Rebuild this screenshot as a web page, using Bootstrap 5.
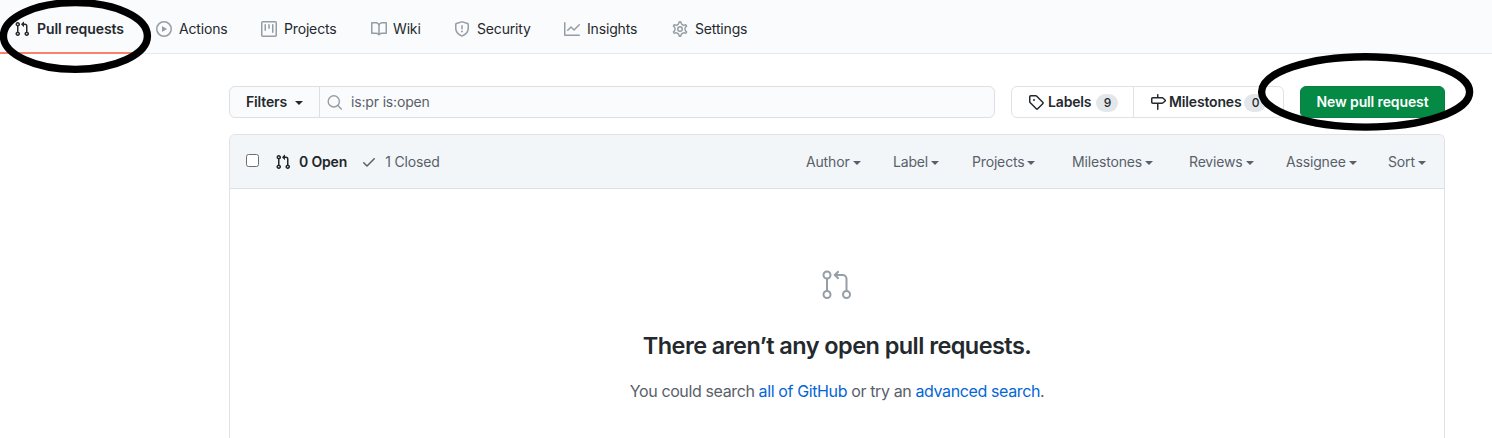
<!DOCTYPE html>
<html lang="en">
<head>
<meta charset="utf-8">
<title>Pull requests</title>
<link href="https://cdn.jsdelivr.net/npm/bootstrap@5.3.0/dist/css/bootstrap.min.css" rel="stylesheet">
<style>
body{font:14px/21px Inter,"Liberation Sans",sans-serif;color:#24292e;letter-spacing:-.16px;background:#fff}
svg{fill:currentColor;flex:none;display:block}
.semi{font-weight:600}
.repo-nav{height:54px;background:#fafbfc;border-bottom:1px solid #e6e8eb}
.repo-nav .nav-link{height:54px;padding:4px 0 0 14px;color:#24292e;gap:7px;white-space:nowrap}
.repo-nav svg{color:#959da5}
.repo-nav span{margin-top:-1px}
.repo-nav .active{width:140px;border-bottom:2px solid #f9826c;padding-top:6px;letter-spacing:-.06px}
.repo-nav .active svg{color:#24292e}
.repo-nav .nav-link:not(.active){padding-left:0}
.n-actions{width:105px;margin-left:16px}.n-projects{width:110px}.n-wiki{width:83px}.n-security{width:110px}.n-insights{width:108px}
.page{width:1216px;margin:32px 0 0 229px}
.tools{height:32px}
.filters{width:91px;height:32px;border:1px solid #dcdfe3;border-radius:6px 0 0 6px;background:#fafbfc;padding:0 0 1px 16px;gap:8px}
.query{width:676px;height:32px;margin-left:-1px;border:1px solid #dcdfe3;border-radius:0 6px 6px 0;background:#fafbfc;color:#586069;padding-left:7px;gap:8px}
.query span{margin-top:-1px}
.links{width:273px;height:32px;margin-left:16px;border:1px solid #dfe2e6;border-radius:6px}
.links>a{color:#24292e;text-decoration:none}
.links span{margin-top:-1px}
.l-labels{width:122px;border-right:1px solid #dfe2e6;padding-left:16px;gap:4px}
.l-miles{padding-left:16px;gap:3px}
.links .counter{background:#e4e7ea;border-radius:10px;height:18px;line-height:18px;font-size:12px;font-weight:500;width:22px;text-align:center;margin:1px 0 0 1px}
.l-miles .counter{margin-left:0}
.new-pr{width:145px;height:32px;margin-left:16px;background:#048a45;border:1px solid #0a7d40;border-radius:6px;color:#fff;font-size:14px;line-height:20px;padding:0;letter-spacing:-.12px}
.caret{width:0;border:4px solid transparent;border-top-color:currentColor;border-bottom:0;position:relative;top:1px}
.list-box{margin-top:16px;height:304px;border:1px solid #dfe2e6;border-bottom:0;border-radius:6px 6px 0 0}
.list-head{height:54px;background:#f3f6f9;border-bottom:1px solid #dcdfe3;border-radius:5px 5px 0 0;color:#586069;padding-left:16px}
.tick{width:13px;height:13px;border:1px solid #6d6f72;border-radius:2.5px;background:#fff;position:relative;top:-1px}
.menus>span{display:flex;align-items:center;gap:3px}
.blank h3{font-size:23.5px;line-height:30px;font-weight:600;letter-spacing:-.56px;margin:30px 0 0}
.blank p{font-size:16px;line-height:24px;color:#586069;margin:18px 0 0;letter-spacing:-.38px}
.blank a{color:#0366d6;text-decoration:none}
.rings{position:absolute;left:0;top:0;pointer-events:none}
</style>
</head>
<body>
<nav class="repo-nav nav flex-nowrap">
<a class="nav-link active semi d-flex align-items-center" href="#"><svg width="16" height="16" viewBox="0 0 16 16"><path id="pr" d="M7.177 3.073L9.573.677A.25.25 0 0110 .854v4.792a.25.25 0 01-.427.177L7.177 3.427a.25.25 0 010-.354zM3.75 2.5a.75.75 0 100 1.5.75.75 0 000-1.5zm-2.25.75a2.25 2.25 0 113 2.122v5.256a2.251 2.251 0 11-1.5 0V5.372A2.25 2.25 0 011.5 3.25zM11 2.5h-1V4h1a1 1 0 011 1v5.628a2.251 2.251 0 101.5 0V5A2.5 2.5 0 0011 2.5zm1 10.25a.75.75 0 111.5 0 .75.75 0 01-1.5 0zM3.75 12a.75.75 0 100 1.5.75.75 0 000-1.5z"/></svg><span>Pull requests</span></a>
<a class="nav-link n-actions d-flex align-items-center" href="#"><svg width="16" height="16" viewBox="0 0 16 16"><path d="M1.5 8a6.5 6.5 0 1113 0 6.5 6.5 0 01-13 0zM8 0a8 8 0 100 16A8 8 0 008 0zM6.379 5.227A.25.25 0 006 5.442v5.117a.25.25 0 00.379.214l4.264-2.559a.25.25 0 000-.428L6.379 5.227z"/></svg><span>Actions</span></a>
<a class="nav-link n-projects d-flex align-items-center" href="#"><svg width="16" height="16" viewBox="0 0 16 16"><path fill-rule="evenodd" d="M1.75 0A1.75 1.75 0 000 1.75v12.5C0 15.216.784 16 1.75 16h12.5A1.75 1.75 0 0016 14.25V1.75A1.75 1.75 0 0014.25 0H1.75zM1.5 1.75a.25.25 0 01.25-.25h12.5a.25.25 0 01.25.25v12.5a.25.25 0 01-.25.25H1.75a.25.25 0 01-.25-.25V1.75zM11.75 3a.75.75 0 00-.75.75v7.5a.75.75 0 001.5 0v-7.5a.75.75 0 00-.75-.75zm-8.25.75a.75.75 0 011.5 0v5.5a.75.75 0 01-1.5 0v-5.5zM8 3a.75.75 0 00-.75.75v3.5a.75.75 0 001.5 0v-3.5A.75.75 0 008 3z"/></svg><span>Projects</span></a>
<a class="nav-link n-wiki d-flex align-items-center" href="#"><svg width="16" height="16" viewBox="0 0 16 16"><path fill-rule="evenodd" d="M0 1.75A.75.75 0 01.75 1h4.253c1.227 0 2.317.59 3 1.501A3.744 3.744 0 0111.006 1h4.245a.75.75 0 01.75.75v10.5a.75.75 0 01-.75.75h-4.507a2.25 2.25 0 00-1.591.659l-.622.621a.75.75 0 01-1.06 0l-.622-.621A2.25 2.25 0 005.258 13H.75a.75.75 0 01-.75-.75V1.75zm8.755 3a2.25 2.25 0 012.25-2.25H14.5v9h-3.757c-.71 0-1.4.201-1.992.572l.004-7.322zm-1.504 7.324l.004-5.073-.002-2.253A2.25 2.25 0 005.003 2.5H1.5v9h3.757a3.75 3.75 0 011.994.574z"/></svg><span style="margin-left:-1px">Wiki</span></a>
<a class="nav-link n-security d-flex align-items-center" href="#"><svg width="16" height="16" viewBox="0 0 16 16"><path fill-rule="evenodd" d="M7.467.133a1.75 1.75 0 011.066 0l5.25 1.68A1.75 1.75 0 0115 3.48V7c0 1.566-.32 3.182-1.303 4.682-.983 1.498-2.585 2.813-5.032 3.855a1.7 1.7 0 01-1.33 0c-2.447-1.042-4.049-2.357-5.032-3.855C1.32 10.182 1 8.566 1 7V3.48a1.75 1.75 0 011.217-1.667l5.25-1.68zm.61 1.429a.25.25 0 00-.153 0l-5.25 1.68a.25.25 0 00-.174.238V7c0 1.358.275 2.666 1.057 3.86.784 1.194 2.121 2.34 4.366 3.297a.2.2 0 00.154 0c2.245-.956 3.582-2.104 4.366-3.298C13.225 9.666 13.5 8.36 13.5 7V3.48a.25.25 0 00-.174-.237l-5.25-1.68zM9 10.5a1 1 0 11-2 0 1 1 0 012 0zm-.25-5.75a.75.75 0 10-1.5 0v3a.75.75 0 001.5 0v-3z"/></svg><span>Security</span></a>
<a class="nav-link n-insights d-flex align-items-center" href="#"><svg width="16" height="16" viewBox="0 0 16 16"><path d="M1.5 1.75a.75.75 0 00-1.5 0v12.5c0 .414.336.75.75.75h14.5a.75.75 0 000-1.5H1.5V1.75zm14.28 2.53a.75.75 0 00-1.06-1.06L10 7.94 7.53 5.47a.75.75 0 00-1.06 0L3.22 8.72a.75.75 0 001.06 1.06L7 7.06l2.47 2.47a.75.75 0 001.06 0l5.25-5.25z"/></svg><span>Insights</span></a>
<a class="nav-link d-flex align-items-center" href="#"><svg width="16" height="16" viewBox="0 0 16 16"><g fill="none" stroke="currentColor"><path stroke-width="1.3" transform="translate(8 8) scale(1.115) translate(-8 -8)" d="M7.429 1.525a6.593 6.593 0 011.142 0c.036.003.108.036.137.146l.289 1.105c.147.56.55.967.997 1.189.174.086.341.183.501.29.417.278.97.423 1.53.27l1.102-.303c.11-.03.175.016.195.046.219.31.41.641.573.989.014.031.022.11-.059.19l-.815.806c-.411.406-.562.957-.53 1.456a4.588 4.588 0 010 .582c-.032.499.119 1.05.53 1.456l.815.806c.08.08.073.159.059.19a6.494 6.494 0 01-.573.99c-.02.029-.086.074-.195.045l-1.103-.303c-.559-.153-1.112-.008-1.529.27-.16.107-.327.204-.5.29-.449.222-.851.628-.998 1.189l-.289 1.105c-.029.11-.101.143-.137.146a6.613 6.613 0 01-1.142 0c-.036-.003-.108-.037-.137-.146l-.289-1.105c-.147-.56-.55-.967-.997-1.189a4.502 4.502 0 01-.501-.29c-.417-.278-.97-.423-1.53-.27l-1.102.303c-.11.03-.175-.016-.195-.046a6.492 6.492 0 01-.573-.989c-.014-.031-.022-.11.059-.19l.815-.806c.411-.406.562-.957.53-1.456a4.587 4.587 0 010-.582c.032-.499-.119-1.05-.53-1.456l-.815-.806c-.08-.08-.073-.159-.059-.19a6.44 6.44 0 01.573-.99c.02-.029.086-.075.195-.045l1.103.303c.559.153 1.112.008 1.529-.27.16-.107.327-.204.5-.29.449-.222.851-.628.998-1.189l.289-1.105c.029-.11.101-.143.137-.146z"/><circle cx="8" cy="8" r="2.25" stroke-width="1.5"/></g></svg><span>Settings</span></a>
</nav>
<main class="page">
<div class="tools d-flex">
<div class="filters semi d-flex align-items-center">Filters<i class="caret"></i></div>
<div class="query d-flex align-items-center"><svg width="16" height="16" viewBox="0 0 16 16" stroke="#959da5" stroke-width="1.4" style="fill:none"><circle cx="6.8" cy="7.4" r="5.6"/><path d="M10.9 11.5l3.4 3.4" stroke-linecap="round"/></svg><span>is:pr is:open</span></div>
<div class="links d-flex">
<a href="#" class="l-labels semi d-flex align-items-center"><svg width="16" height="16" viewBox="0 0 16 16"><path fill-rule="evenodd" d="M2.5 7.775V2.75a.25.25 0 01.25-.25h5.025a.25.25 0 01.177.073l6.25 6.25a.25.25 0 010 .354l-5.025 5.025a.25.25 0 01-.354 0l-6.25-6.25a.25.25 0 01-.073-.177zm-1.5 0V2.75C1 1.784 1.784 1 2.75 1h5.025c.464 0 .91.184 1.238.513l6.25 6.25a1.75 1.75 0 010 2.474l-5.026 5.026a1.75 1.75 0 01-2.474 0l-6.25-6.25A1.75 1.75 0 011 7.775zM6 5a1 1 0 100 2 1 1 0 000-2z"/></svg><span>Labels</span><span class="counter">9</span></a>
<a href="#" class="l-miles semi d-flex align-items-center"><svg width="16" height="16" viewBox="0 0 16 16"><path fill-rule="evenodd" d="M7.75 0a.75.75 0 01.75.75V3h3.634c.414 0 .814.147 1.13.414l2.07 1.75a1.75 1.75 0 010 2.672l-2.07 1.75a1.75 1.75 0 01-1.13.414H8.5v5.25a.75.75 0 11-1.5 0V10H2.75A1.75 1.75 0 011 8.25v-3.5C1 3.784 1.784 3 2.75 3H7V.75A.75.75 0 017.75 0zm0 8.5h4.384a.25.25 0 00.161-.06l2.07-1.75a.25.25 0 000-.38l-2.07-1.75a.25.25 0 00-.161-.06H2.75a.25.25 0 00-.25.25v3.5c0 .138.112.25.25.25h5z"/></svg><span>Milestones</span><span class="counter">0</span></a>
</div>
<button class="btn new-pr semi">New pull request</button>
</div>
<section class="list-box">
<div class="list-head d-flex align-items-center">
<span class="tick"></span>
<svg class="ms-3 text-body" width="16" height="16" viewBox="0 0 16 16"><use href="#pr"/></svg>
<span class="semi text-body ms-2">0 Open</span>
<svg width="16" height="16" viewBox="0 0 16 16" style="margin-left:14px"><path d="M13.78 4.22a.75.75 0 010 1.06l-7.25 7.25a.75.75 0 01-1.06 0L2.22 9.28a.75.75 0 011.06-1.06L6 10.94l6.72-6.72a.75.75 0 011.06 0z"/></svg>
<span class="ms-2">1 Closed</span>
<div class="menus d-flex ms-auto">
<span style="width:87px">Author<i class="caret"></i></span><span style="width:79px">Label<i class="caret"></i></span><span style="width:100px">Projects<i class="caret"></i></span><span style="width:117px">Milestones<i class="caret"></i></span><span style="width:97px">Reviews<i class="caret"></i></span><span style="width:102px">Assignee<i class="caret"></i></span><span style="width:56px">Sort<i class="caret"></i></span>
</div>
</div>
<div class="blank text-center">
<svg class="mx-auto" width="32" height="32" viewBox="0 0 32 32" style="fill:none;color:#959da5;margin-top:80px" stroke="currentColor" stroke-width="2"><circle cx="6" cy="6" r="3.5"/><circle cx="6" cy="25.5" r="3.5"/><circle cx="25.5" cy="25.5" r="3.5"/><path d="M6 9.5V22M25.5 22V10a4 4 0 00-4-4H14M17.6 2.3L13.8 6l3.8 3.7"/></svg>
<h3>There aren’t any open pull requests.</h3>
<p>You could search <a href="#">all of GitHub</a> or try an <a href="#">advanced search</a>.</p>
</div>
</section>
</main>
<svg class="rings" width="1492" height="140" viewBox="0 0 1492 140" style="fill:none" stroke="#000" stroke-width="7.4"><ellipse cx="75.4" cy="36" rx="72" ry="33.4"/><ellipse cx="1365.6" cy="91.9" rx="104" ry="35.2"/></svg>
<script src="https://cdn.jsdelivr.net/npm/bootstrap@5.3.0/dist/js/bootstrap.bundle.min.js"></script>
</body>
</html>
